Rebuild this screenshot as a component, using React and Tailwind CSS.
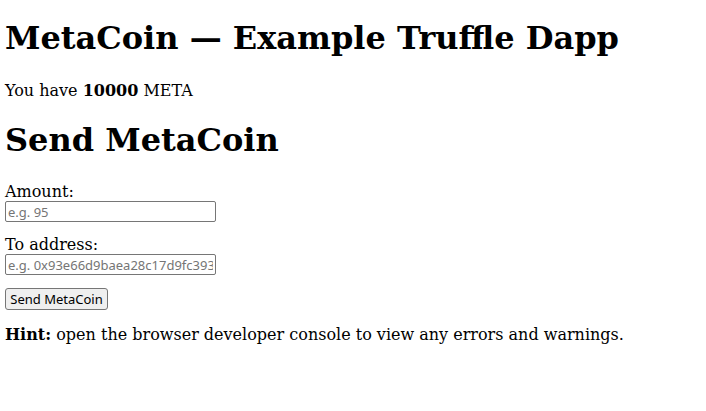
export default function App() {
  return (
    <div className="flow-root min-h-screen bg-white px-[5px] text-black font-['DejaVu_Serif',serif]">
      <h1 className="mt-[20px] text-[32px] leading-[37px] font-bold">
        MetaCoin — Example Truffle Dapp
      </h1>

      <p className="mt-[24px] text-[16px] leading-[19px]">
        You have <span className="font-bold">10000</span> META
      </p>

      <h2 className="mt-[22px] text-[32px] leading-[37px] font-bold">Send MetaCoin</h2>

      {/* Send form */}
      <div className="mt-[23px] flex flex-col items-start">
        <label htmlFor="amount" className="text-[16px] leading-[19px]">
          Amount:
        </label>
        <input
          id="amount"
          type="text"
          placeholder="e.g. 95"
          className="h-[21px] w-[211px] rounded-[2px] border border-[#767676] px-[2px] text-[13px] font-['Noto_Sans',sans-serif] placeholder:text-[#757575] outline-none"
        />

        <label htmlFor="receiver" className="mt-[13px] text-[16px] leading-[19px]">
          To address:
        </label>
        <input
          id="receiver"
          type="text"
          placeholder="e.g. 0x93e66d9baea28c17d9fc393b1ae0a3c8e4f5a7d2"
          className="h-[21px] w-[211px] rounded-[2px] border border-[#767676] px-[2px] text-[13px] font-['Noto_Sans',sans-serif] placeholder:text-[#757575] outline-none"
        />

        <button className="mt-[13px] h-[22px] w-[103px] whitespace-nowrap rounded-[3px] border border-[#767676] bg-[#efefef] text-[13px] leading-[18px] font-['Noto_Sans',sans-serif]">
          Send MetaCoin
        </button>
      </div>

      <p className="mt-[15px] text-[16px] leading-[19px]">
        <span className="font-bold">Hint:</span> open the browser developer console to view any
        errors and warnings.
      </p>
    </div>
  );
}
